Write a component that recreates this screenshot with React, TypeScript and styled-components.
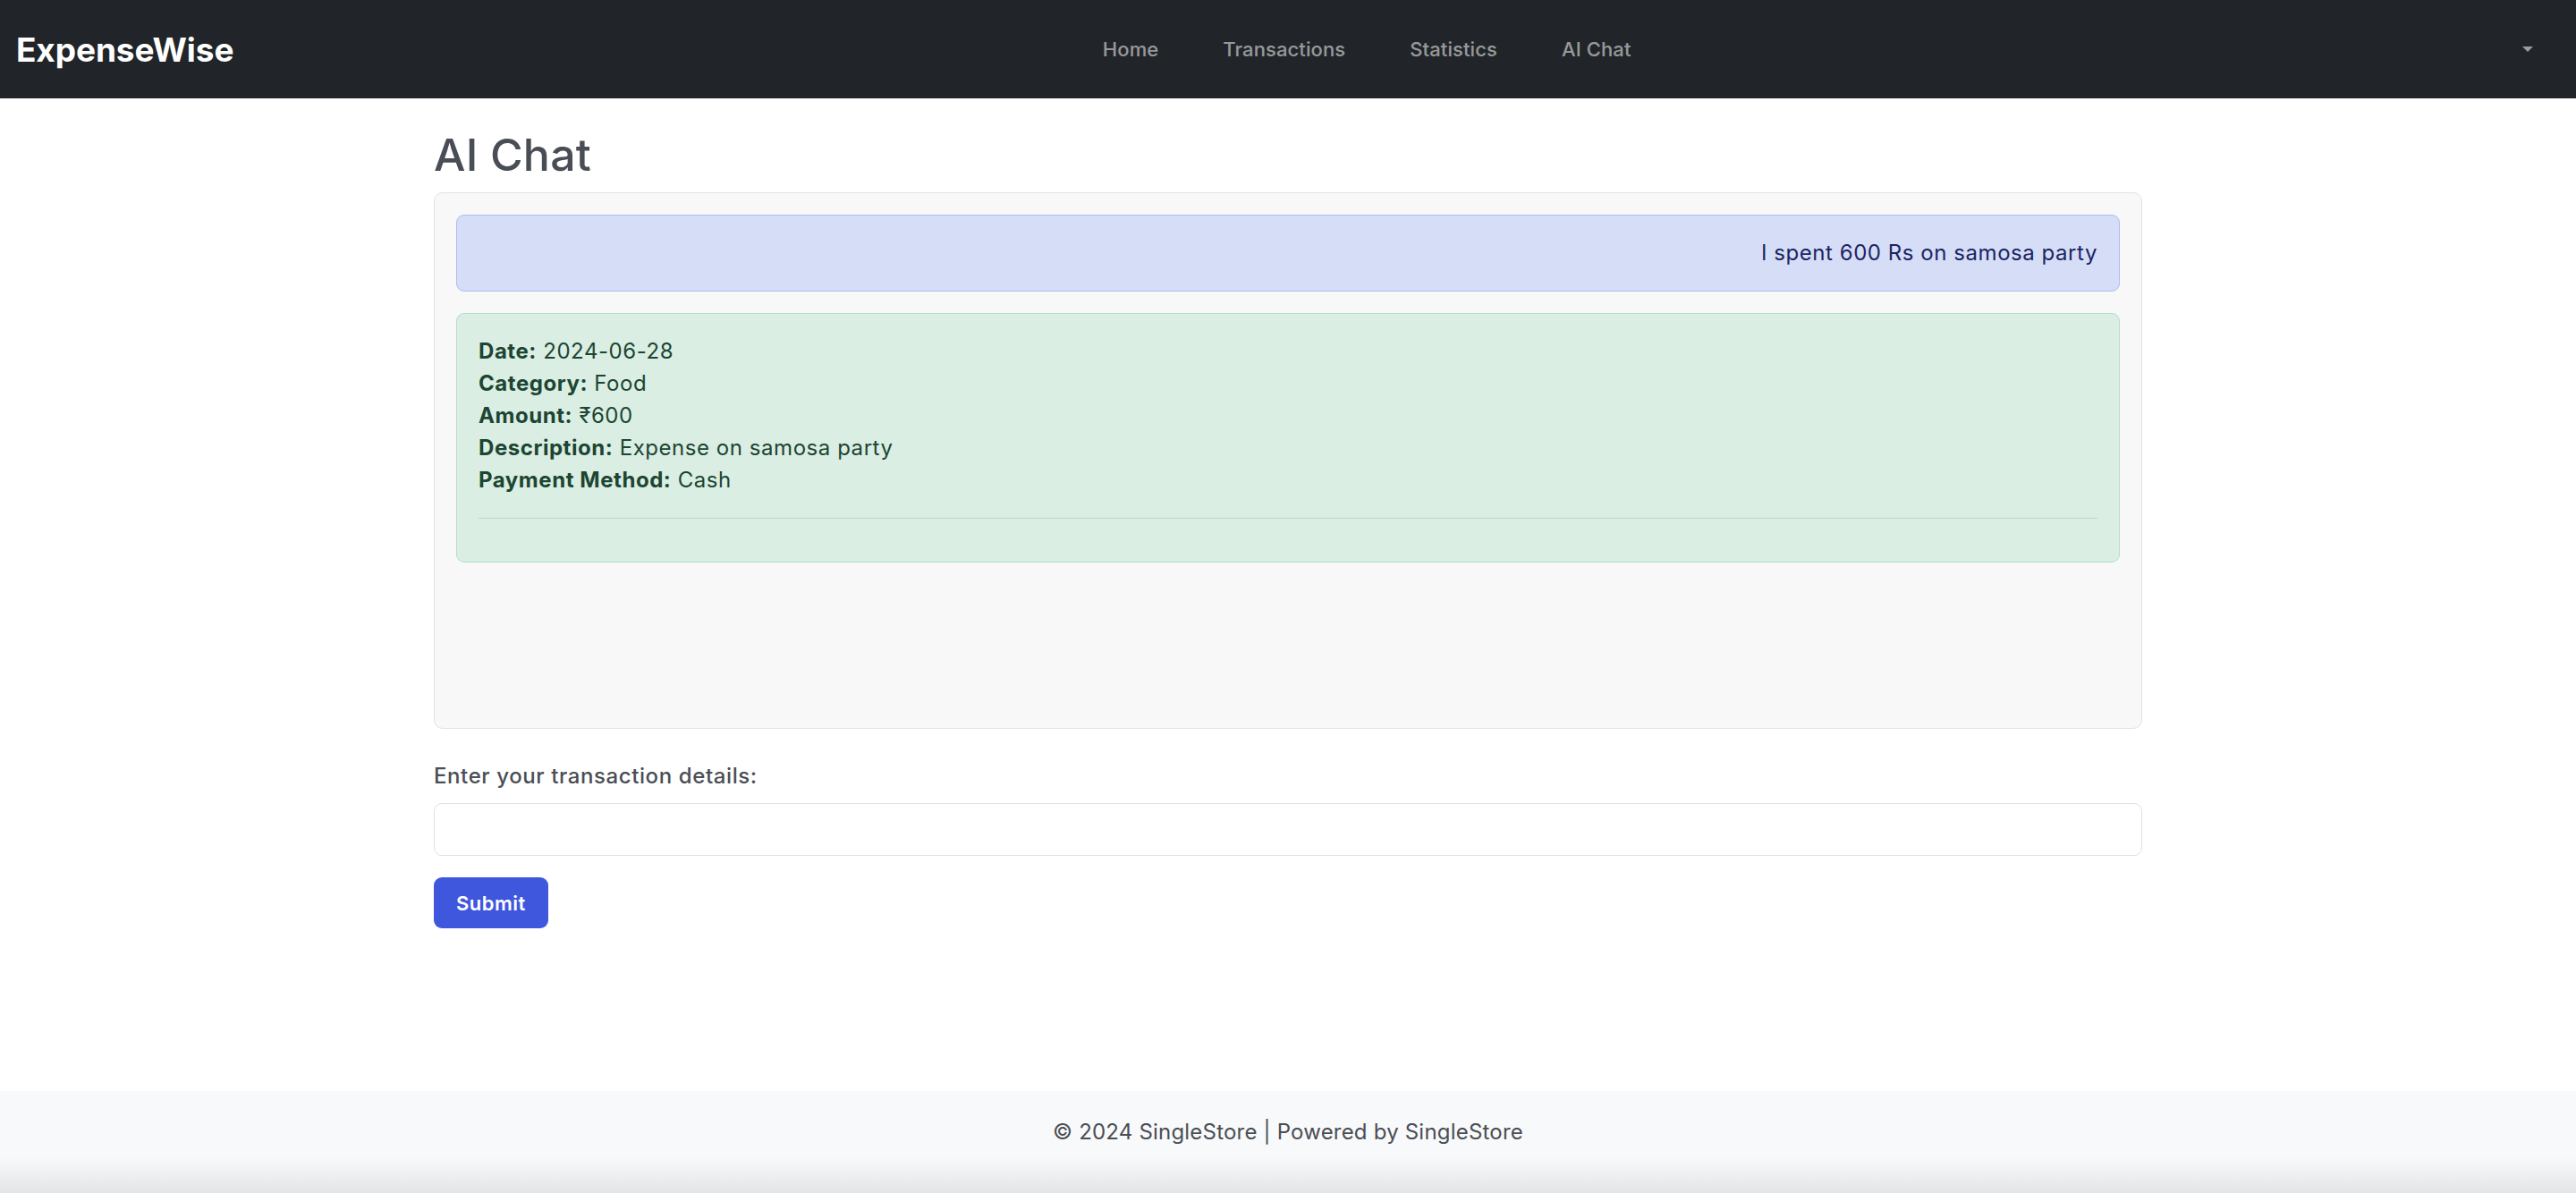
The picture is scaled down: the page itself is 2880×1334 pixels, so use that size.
import React from 'react';
import styled, { createGlobalStyle } from 'styled-components';

const GlobalStyle = createGlobalStyle`
  * {
    box-sizing: border-box;
  }

  body {
    margin: 0;
    background-color: #ffffff;
    font-family: Inter, "Noto Sans", sans-serif;
    color: #212529;
  }
`;

const Page = styled.div`
  display: flex;
  flex-direction: column;
  min-height: 100vh;
`;

const Navbar = styled.nav`
  display: flex;
  align-items: center;
  height: 110px;
  padding: 0 18px;

  background-color: #212529;
`;

const Brand = styled.a`
  font-size: 37px;
  font-weight: 700;
  letter-spacing: -0.1px;
  color: #ffffff;
  text-decoration: none;
`;

const NavList = styled.ul`
  display: flex;
  justify-content: center;
  flex: 1;
  margin: 0;
  padding: 0;
  list-style: none;
`;

const NavLink = styled.a`
  display: block;
  padding: 0 36px;

  font-size: 22px;
  font-weight: 500;
  letter-spacing: 0.1px;
  color: rgba(255, 255, 255, 0.55);
  text-decoration: none;
`;

const DropdownToggle = styled.button`
  display: flex;
  align-items: center;
  padding: 12px 30px 12px 25px;

  background: none;
  border: none;

  &::after {
    content: '';
    border-top: 6px solid rgba(255, 255, 255, 0.55);
    border-left: 6px solid transparent;
    border-right: 6px solid transparent;
  }
`;

const Main = styled.main`
  flex: 1;
  width: 100%;
  max-width: 1910px;
  margin: 0 auto;
  padding-top: 33px;
`;

const Title = styled.h1`
  margin: 0 0 12px;

  font-size: 50px;
  font-weight: 500;
  line-height: 1.2;
  letter-spacing: 0.2px;
  color: #494d55;
`;

const ChatBox = styled.div`
  height: 600px;
  margin-bottom: 35px;
  padding: 24px;
  overflow-y: auto;

  background-color: #f8f8f8;
  border: 1px solid #e2e3e5;
  border-radius: 10px;
`;

const Message = styled.div<{ $from: 'user' | 'bot' }>`
  margin-bottom: 24px;
  padding: 24px;

  border: 1px solid ${({ $from }) => ($from === 'user' ? '#aebcf0' : '#b3dec8')};
  border-radius: 9px;
  background-color: ${({ $from }) => ($from === 'user' ? '#d6ddf7' : '#daeee4')};

  font-size: 24px;
  line-height: 36px;
  letter-spacing: 0.55px;
  color: ${({ $from }) => ($from === 'user' ? '#1a2563' : '#1c4532')};
  text-align: ${({ $from }) => ($from === 'user' ? 'right' : 'left')};
`;

const Field = styled.div`
  font-weight: 400;

  strong {
    font-weight: 700;
  }
`;

const Divider = styled.hr`
  margin: 24px 0;
  height: 0;

  border: none;
  border-top: 1px solid currentColor;
  opacity: 0.25;
`;

const Form = styled.form`
  display: flex;
  flex-direction: column;
  align-items: flex-start;
`;

const Label = styled.label`
  margin-bottom: 12px;

  font-size: 24px;
  font-weight: 500;
  line-height: 36px;
  letter-spacing: 0.6px;
  color: #4a4e55;
`;

const Input = styled.input`
  width: 100%;
  height: 59px;
  padding: 9px 18px;

  background-color: #ffffff;
  border: 1px solid #dee2e6;
  border-radius: 9px;

  font-family: inherit;
  font-size: 24px;
  color: #212529;
`;

const SubmitButton = styled.button`
  height: 57px;
  margin-top: 24px;
  padding: 0 25px;

  background-color: #3f57dc;
  border: none;
  border-radius: 9px;

  font-family: inherit;
  font-size: 22px;
  font-weight: 600;
  letter-spacing: 0.5px;
  color: #ffffff;
`;

const Footer = styled.footer`
  height: 114px;
  padding-top: 28px;

  background: linear-gradient(#f8f9fa 65%, #e4e5e7 100%);

  font-size: 24px;
  line-height: 36px;
  letter-spacing: 0.2px;
  text-align: center;
  color: #4a4e55;
`;

interface Transaction {
  date: string;
  category: string;
  amount: string;
  description: string;
  paymentMethod: string;
}

const transaction: Transaction = {
  date: '2024-06-28',
  category: 'Food',
  amount: '₹600',
  description: 'Expense on samosa party',
  paymentMethod: 'Cash',
};

const App: React.FC = () => {
  return (
    <Page>
      <GlobalStyle />
      <Navbar>
        <Brand href="#">ExpenseWise</Brand>
        <NavList>
          {['Home', 'Transactions', 'Statistics', 'AI Chat'].map((item) => (
            <li key={item}>
              <NavLink href="#">{item}</NavLink>
            </li>
          ))}
        </NavList>
        <DropdownToggle type="button" aria-label="Account menu" />
      </Navbar>

      <Main>
        <Title>AI Chat</Title>
        <ChatBox>
          <Message $from="user">I spent 600 Rs on samosa party</Message>
          <Message $from="bot">
            <Field>
              <strong>Date:</strong> {transaction.date}
            </Field>
            <Field>
              <strong>Category:</strong> {transaction.category}
            </Field>
            <Field>
              <strong>Amount:</strong> {transaction.amount}
            </Field>
            <Field>
              <strong>Description:</strong> {transaction.description}
            </Field>
            <Field>
              <strong>Payment Method:</strong> {transaction.paymentMethod}
            </Field>
            <Divider />
          </Message>
        </ChatBox>
        <Form onSubmit={(e) => e.preventDefault()}>
          <Label htmlFor="details">Enter your transaction details:</Label>
          <Input id="details" type="text" />
          <SubmitButton type="submit">Submit</SubmitButton>
        </Form>
      </Main>

      <Footer>© 2024 SingleStore | Powered by SingleStore</Footer>
    </Page>
  );
};

export default App;
